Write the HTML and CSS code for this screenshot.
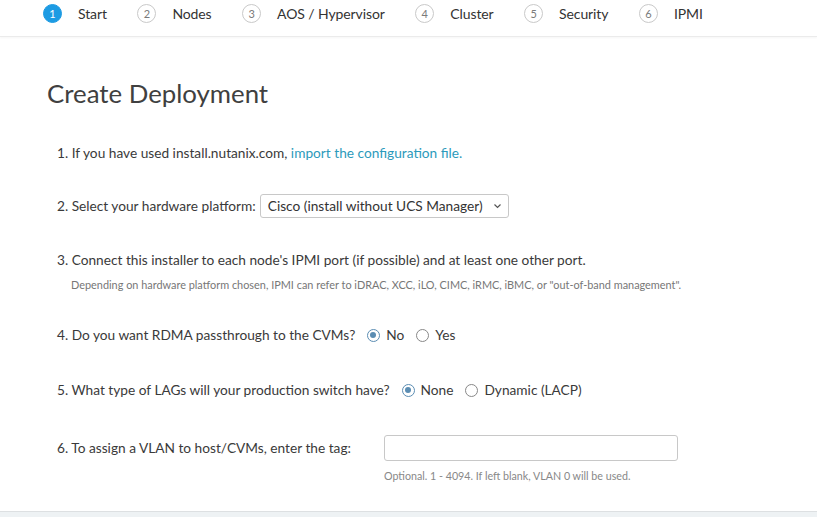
FILE: index.html
```html
<!DOCTYPE html>
<html>
<head>
<meta charset="utf-8">
<link rel="stylesheet" href="styles.css">
</head>
<body>
<div class="steps">
  <div class="step active"><span class="num">1</span><span class="label">Start</span></div>
  <div class="step"><span class="num">2</span><span class="label">Nodes</span></div>
  <div class="step"><span class="num">3</span><span class="label">AOS / Hypervisor</span></div>
  <div class="step"><span class="num">4</span><span class="label">Cluster</span></div>
  <div class="step"><span class="num">5</span><span class="label">Security</span></div>
  <div class="step"><span class="num">6</span><span class="label">IPMI</span></div>
</div>
<div class="main">
  <h1 class="title">Create Deployment</h1>
  <div class="item item1">1. If you have used install.nutanix.com, <a class="link">import the configuration file.</a></div>
  <div class="item item2">2. Select your hardware platform:
    <div class="select"><span>Cisco (install without UCS Manager)</span><svg width="9" height="6" viewBox="0 0 9 6"><path d="M1.5 1.5 L4.5 4.5 L7.5 1.5" fill="none" stroke="#555" stroke-width="1.2"/></svg></div>
  </div>
  <div class="item item3">3. Connect this installer to each node's IPMI port (if possible) and at least one other port.
    <div class="note">Depending on hardware platform chosen, IPMI can refer to iDRAC, XCC, iLO, CIMC, iRMC, iBMC, or "out-of-band management".</div>
  </div>
  <div class="item item4">4. Do you want RDMA passthrough to the CVMs?
    <span class="radio checked"></span><span class="rlabel">No</span>
    <span class="radio"></span><span class="rlabel">Yes</span>
  </div>
  <div class="item item5">5. What type of LAGs will your production switch have?
    <span class="radio checked"></span><span class="rlabel">None</span>
    <span class="radio"></span><span class="rlabel">Dynamic (LACP)</span>
  </div>
  <div class="item item6">
    <span class="q6">6. To assign a VLAN to host/CVMs, enter the tag:</span>
    <div class="field">
      <div class="input"></div>
      <div class="hint">Optional. 1 - 4094. If left blank, VLAN 0 will be used.</div>
    </div>
  </div>
</div>
<div class="footer"></div>
</body>
</html>
```
FILE: styles.css
```css
html, body { margin: 0; padding: 0; }
body {
  width: 817px; height: 517px; overflow: hidden;
  font-family: Lato, "Open Sans", sans-serif;
  color: #3b3b3b;
  background: #fff;
  position: relative;
}
.steps {
  height: 37px;
  border-bottom: 1px solid #ebebeb;
  box-shadow: 0 1px 2px rgba(0,0,0,0.04);
  display: flex;
  align-items: flex-start;
  padding-left: 43px;
  gap: 30.5px;
  box-sizing: border-box;
}
.step { display: flex; align-items: center; height: 26px; gap: 16px; }
.num {
  width: 19px; height: 19px; border-radius: 50%;
  border: 1px solid #c9c9c9; box-sizing: border-box;
  font-size: 11px; color: #7a7a7a;
  display: flex; align-items: center; justify-content: center;
}
.step.active .num { background: #1d9be3; border-color: #1d9be3; color: #fff; }
.label { font-size: 14px; color: #333; letter-spacing: -0.1px; }
.main { padding-left: 47px; }
.title {
  margin: 0; padding-top: 38px;
  font-weight: 400; font-size: 25.8px; color: #404040;
  height: 42px; line-height: 36px;
}
.item { font-size: 13.7px; line-height: 16px; padding-left: 10px; color: #3a3a3a; }
.item1 { margin-top: 28px; }
.link { color: #2c9abb; }
.item2 { margin-top: 33px; display: flex; align-items: center; gap: 4px; height: 24px; }
.select {
  border: 1px solid #c8c8c8; border-radius: 3px;
  height: 24px; box-sizing: border-box; width: 249px;
  display: flex; align-items: center; justify-content: space-between;
  padding: 0 6px 0 7px; font-size: 13.7px; color: #333;
}
.item3 { margin-top: 34px; }
.note { font-size: 10.9px; line-height: 13px; color: #777; padding-left: 14px; margin-top: 10px; }
.item4 { margin-top: 36px; display: flex; align-items: center; }
.item5 { margin-top: 39px; display: flex; align-items: center; }
.radio {
  width: 13px; height: 13px; border-radius: 50%;
  border: 1.5px solid #888; box-sizing: border-box; margin-left: 12px; margin-right: 6px;
  position: relative;
}
.radio.checked { border-color: #5b8db3; }
.radio.checked::after {
  content: ""; position: absolute; left: 2px; top: 2px;
  width: 6px; height: 6px; border-radius: 50%; background: #5b8db3;
}
.item6 { margin-top: 37px; display: flex; align-items: flex-start; }
.q6 { margin-top: 5px; width: 327px; }
.field { display: flex; flex-direction: column; }
.input {
  width: 294px; height: 26px; box-sizing: border-box;
  border: 1px solid #c8c8c8; border-radius: 3px;
}
.hint { font-size: 10.7px; line-height: 13px; color: #888; margin-top: 8px; }
.footer {
  position: absolute; left: 0; right: 0; bottom: 0; height: 5px;
  border-top: 1px solid #dde0e2; background: #eef2f4;
}
```
